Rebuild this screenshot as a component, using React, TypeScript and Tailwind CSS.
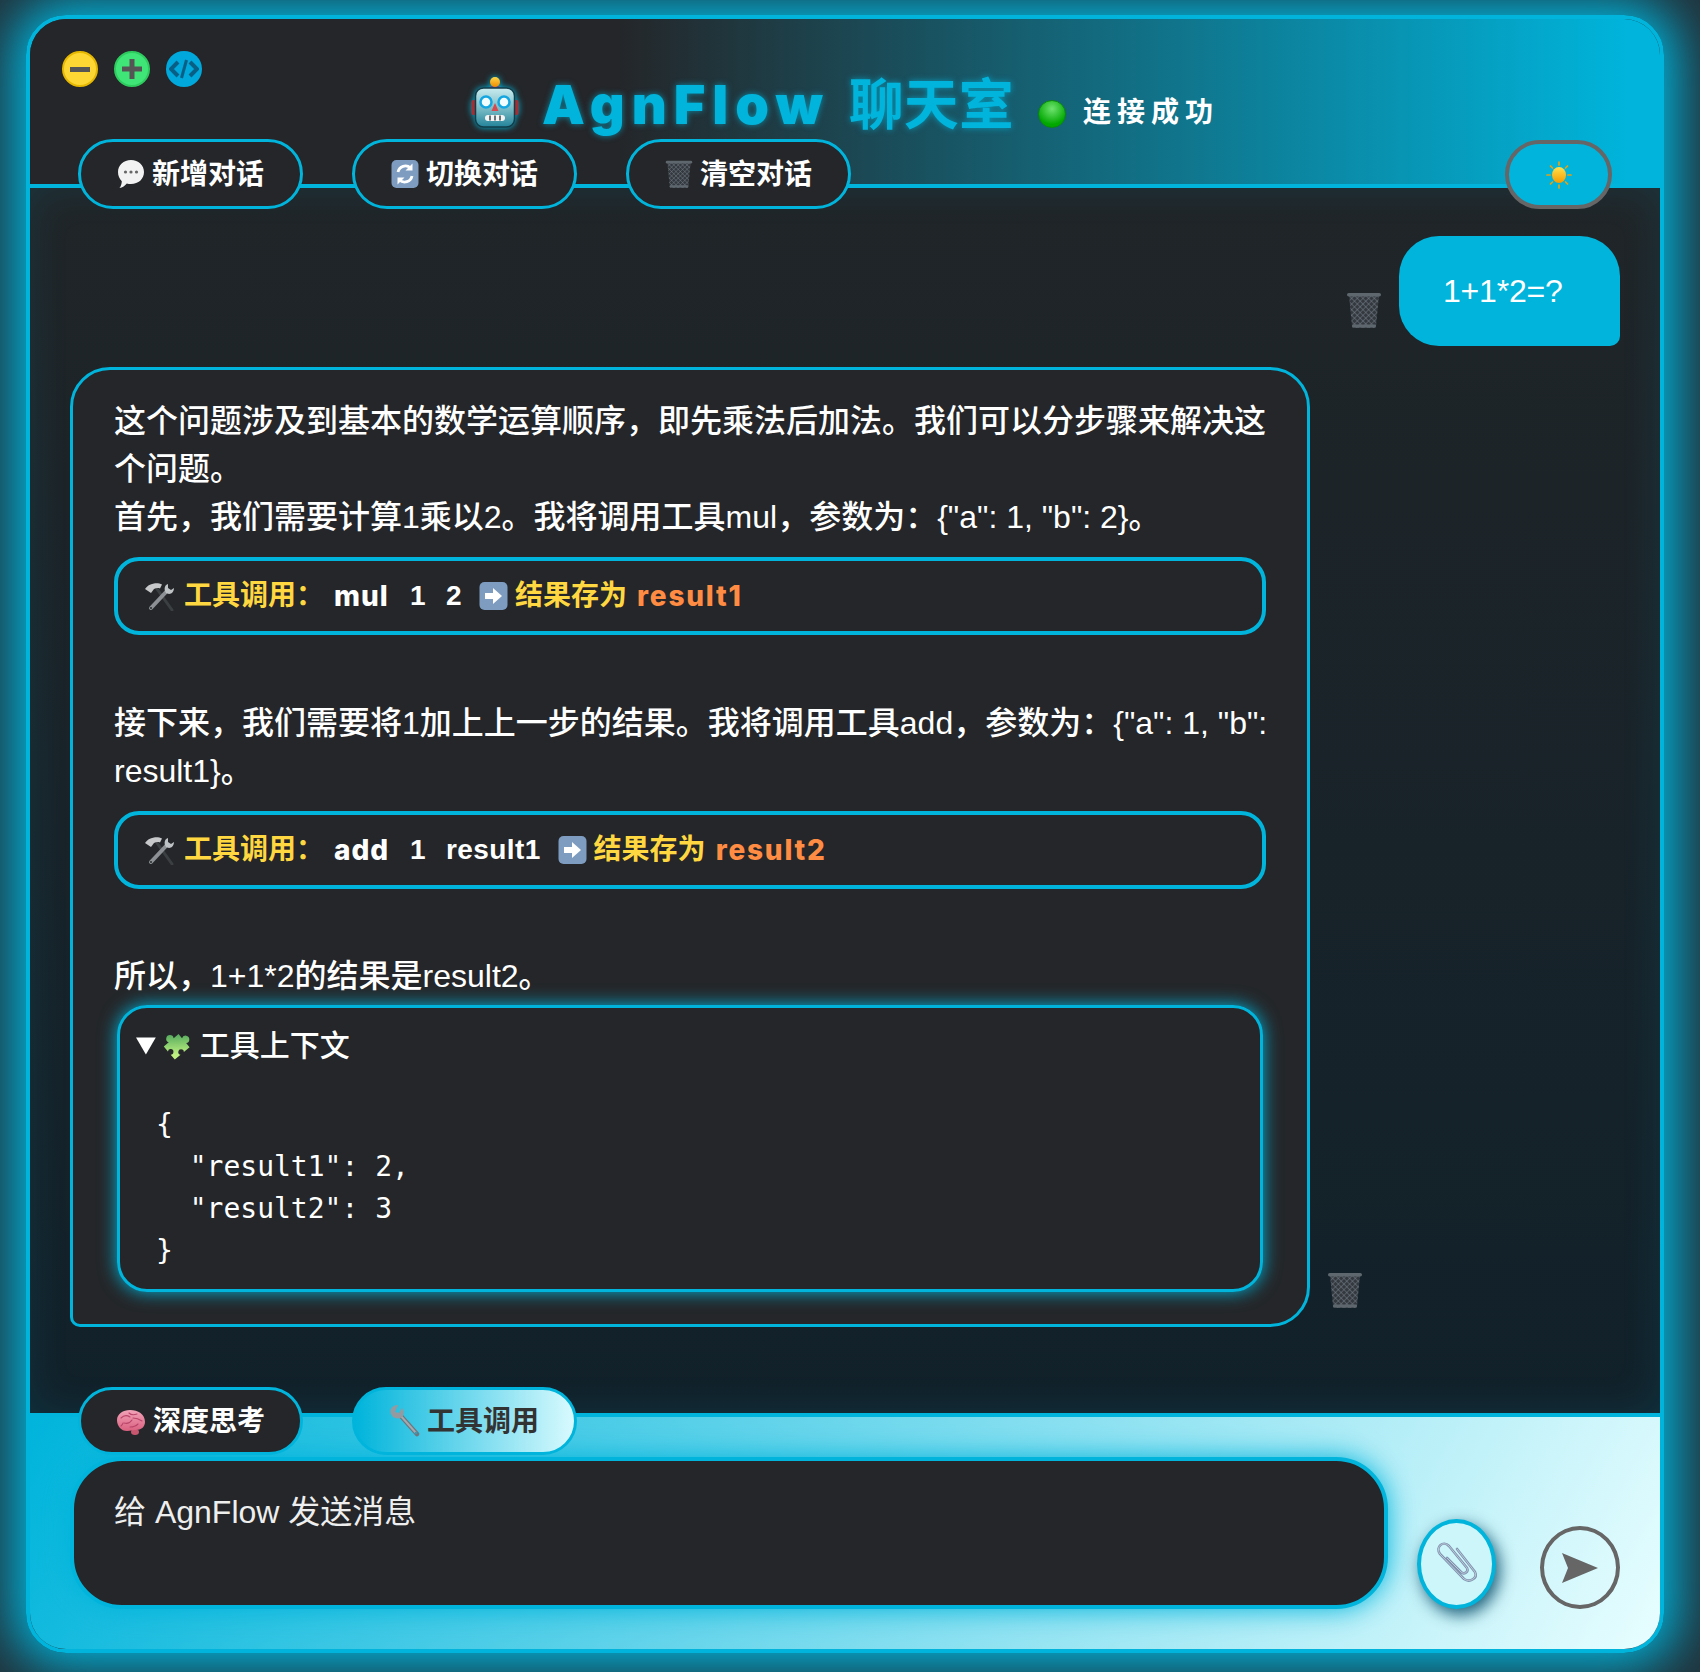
import React from "react";

const Robot = () => (
  <svg width="48" height="52" viewBox="0 0 48 52">
    <defs>
      <linearGradient id="robotHead" x1="0" y1="0" x2="0" y2="1">
        <stop offset="0" stopColor="#c9ecef" />
        <stop offset="0.55" stopColor="#76b9c4" />
        <stop offset="1" stopColor="#23839a" />
      </linearGradient>
      <linearGradient id="robotBall" x1="0" y1="0" x2="0" y2="1">
        <stop offset="0" stopColor="#ffd84a" />
        <stop offset="1" stopColor="#f08a00" />
      </linearGradient>
    </defs>
    <path d="M18 13c1-3 3-4 6-4s5 1 6 4z" fill="#5e4a8c" />
    <circle cx="24" cy="6" r="5" fill="url(#robotBall)" />
    <rect x="0.500" y="24" width="6" height="15" rx="2" fill="#a32f35" />
    <rect x="41.500" y="24" width="6" height="15" rx="2" fill="#a32f35" />
    <rect x="4.500" y="12" width="39" height="39" rx="8" fill="url(#robotHead)" stroke="#123c48" strokeWidth="1.500" />
    <circle cx="15" cy="26" r="5.500" fill="#f2fdff" stroke="#14a6e0" strokeWidth="2.500" />
    <circle cx="33" cy="26" r="5.500" fill="#f2fdff" stroke="#14a6e0" strokeWidth="2.500" />
    <path d="M24 27l3.500 8h-7z" fill="#d8484f" />
    <rect x="14" y="39" width="20" height="6" rx="3" fill="#f2f4f4" />
    <path d="M19 39.500v5M24 39.500v5M29 39.500v5" stroke="#37474f" strokeWidth="1.500" />
  </svg>
);

const Bubble = () => (
  <svg width="28" height="30" viewBox="0 0 28 30">
    <path d="M14 1c7.500 0 13 5 13 12s-5.500 12-13 12c-1.500 0-3-.2-4.200-.6C8 26.500 5.500 28.500 2.500 29c1.300-1.700 2.200-4 2.300-6.800C2.400 19.900 1 16.700 1 13 1 6 6.500 1 14 1z" fill="#f2f2f2" />
    <circle cx="8.500" cy="13" r="1.600" fill="#666" />
    <circle cx="14" cy="13" r="1.600" fill="#666" />
    <circle cx="19.500" cy="13" r="1.600" fill="#666" />
  </svg>
);

const Refresh = () => (
  <svg width="28" height="30" viewBox="0 0 28 30">
    <rect x="0.500" y="1" width="27" height="28" rx="5" fill="#7d9cc0" />
    <path d="M7 13a7.500 7.500 0 0 1 12.500-4" fill="none" stroke="#fff" strokeWidth="2.800" />
    <path d="M21.500 4.500v7h-7z" fill="#fff" />
    <path d="M21 17a7.500 7.500 0 0 1-12.500 4" fill="none" stroke="#fff" strokeWidth="2.800" />
    <path d="M6.500 25.500v-7h7z" fill="#fff" />
  </svg>
);

const Trash = ({ w = 28, h = 30 }: { w?: number; h?: number }) => (
  <svg width={w} height={h} viewBox="0 0 36 36">
    <defs>
      <pattern id="trashMesh" width="4" height="4" patternUnits="userSpaceOnUse" patternTransform="rotate(45)">
        <rect width="4" height="4" fill="#33393f" />
        <path d="M0 0h4M0 0v4" stroke="#79818a" strokeWidth="1" />
      </pattern>
    </defs>
    <path d="M3 3h30l-3 31c0 1-1 2-2 2H8c-1 0-2-1-2-2z" fill="url(#trashMesh)" />
    <rect x="1" y="1" width="34" height="3.500" rx="1.700" fill="#5f676e" />
    <rect x="6" y="32.500" width="24" height="3" rx="1.500" fill="#5f676e" />
  </svg>
);

const Sun = () => (
  <svg width="26" height="28" viewBox="0 0 26 28">
    <defs>
      <linearGradient id="sunCore" x1="0" y1="0" x2="0" y2="1">
        <stop offset="0" stopColor="#ffe14d" />
        <stop offset="1" stopColor="#f59a00" />
      </linearGradient>
    </defs>
    <ellipse cx="13" cy="14" rx="7" ry="8" fill="url(#sunCore)" />
    <path d="M13 1v3M13 24v3M1 14h3M22 14h3M4.500 5l2 2M19.500 21l2 2M21.500 5l-2 2M6.500 21l-2 2" stroke="#e8a010" strokeWidth="1.700" strokeLinecap="round" />
  </svg>
);

const Tools = () => (
  <svg width="30" height="30" viewBox="0 0 30 30">
    <path d="M12 8l15 21" stroke="#3c3f42" strokeWidth="3" strokeLinecap="round" />
    <path d="M0 8c2-3 5-5 9-5.500 3-.4 6 0 8 1l-2 4c-2-.7-4-.5-6 .5L6 12z" fill="#c6c8ca" />
    <path d="M21 11L6 27" stroke="#8d9195" strokeWidth="4" strokeLinecap="round" />
    <circle cx="6" cy="27" r="1" fill="#2a2c2e" />
    <path d="M23 3c-3 1-4 4-3 7l1 2 3 1c3 0 5-3 5-6l-3 2-3-2z" fill="#bfc2c5" />
  </svg>
);

const ArrowBox = () => (
  <svg width="29" height="30" viewBox="0 0 29 30">
    <rect x="0.500" y="1" width="28" height="28" rx="5" fill="#7d9cc0" />
    <path d="M6 12h8V7l9 8-9 8v-5H6z" fill="#fff" />
  </svg>
);

const Puzzle = () => (
  <svg width="30" height="30" viewBox="1 1 28 28">
    <defs>
      <linearGradient id="puzzleFill" x1="0.820" y1="0.120" x2="0.180" y2="0.880">
        <stop offset="0" stopColor="#45a058" />
        <stop offset="1" stopColor="#bdf080" />
      </linearGradient>
    </defs>
    <g transform="rotate(-40 15 15)">
      <path
        d="M6 8h6a3.500 3.500 0 1 1 6 0h6v5a3.500 3.500 0 1 1 0 6v5h-7a2.600 2.600 0 1 0-4 0H6v-6a2.600 2.600 0 1 0 0-4z"
        fill="url(#puzzleFill)"
      />
    </g>
  </svg>
);

const Brain = () => (
  <svg width="30" height="30" viewBox="0 0 30 30">
    <defs>
      <linearGradient id="brainFill" x1="0" y1="0" x2="0" y2="1">
        <stop offset="0" stopColor="#f2a3b8" />
        <stop offset="1" stopColor="#d9607f" />
      </linearGradient>
    </defs>
    <ellipse cx="19" cy="26" rx="4" ry="3" fill="#c9566f" />
    <path d="M1 14C1 8 7 4 14 4c8 0 15 4 15 12 0 5-4 8-9 8-4 0-5 1-9 1-6 0-10-5-10-11z" fill="url(#brainFill)" />
    <path d="M5 12c3-3 6-3 9-1M13 7c2 2 5 2 8 1M8 17c3 1 6 0 8-3M17 12c3 0 6 1 9 3M14 21c3 0 6-1 8-3M5 20c1-1 2-2 2-3" stroke="#b9466a" strokeWidth="1.100" fill="none" strokeLinecap="round" />
  </svg>
);

const Wrench = () => (
  <svg width="30" height="32" viewBox="0 0 30 32">
    <path d="M10 10l17 19" stroke="#6f767c" strokeWidth="4.500" strokeLinecap="round" />
    <path d="M10 10l16 18" stroke="#a3a9ae" strokeWidth="2" strokeLinecap="round" />
    <circle cx="26" cy="28" r="1.200" fill="#2e9dc0" />
    <path d="M8 0C3 0-1 4 1 9l2 3c3 2 8 2 10-1 1-3 1-6-1-8l-3 5-4-1z" fill="#949aa0" />
  </svg>
);

const Paperclip = () => (
  <svg width="60" height="60" viewBox="2 3 60 60" fill="none">
    <path d="M32 18L50 41C53 47 45 52 39 48L15 23C10 16 18 9 24 15L42 37C44 41 39 44 36 41L22 27" stroke="#7f93ad" strokeWidth="2.600" strokeLinecap="round" />
    <path d="M32 18L50 41C53 47 45 52 39 48L15 23C10 16 18 9 24 15L42 37C44 41 39 44 36 41L22 27" stroke="#c4cfdf" strokeWidth="0.900" strokeLinecap="round" />
  </svg>
);

const Resizer = () => (
  <svg width="14" height="14" viewBox="0 0 14 14">
    <path d="M1 13L13 1M7 13l6-6" stroke="#2d4a52" strokeWidth="2" />
  </svg>
);

const NavButton = ({ icon, label }: { icon: React.ReactNode; label: string }) => (
  <button className="flex h-[70px] w-[225px] items-center justify-center gap-[7px] rounded-[35px] border-[3px] border-[#00b4db] bg-[#242629] text-[28px] font-bold text-white">
    {icon}
    <span className="pt-[2px]">{label}</span>
  </button>
);

const ToolCall = ({ name, args, result }: { name: string; args: string[]; result: string }) => (
  <div className="mt-[16px] flex h-[78px] items-center rounded-[25px] border-4 border-[#00b4db] pl-[27px] text-[28px] font-bold">
    <Tools />
    <span className="ml-[9px] w-[140px] text-[#ffd740]">工具调用：</span>
    <span className="ml-[10px] w-[59px] font-['Inter',sans-serif] font-extrabold tracking-[1px] text-white">{name}</span>
    <span className="ml-[17px] flex gap-[20px] font-['Liberation_Sans',sans-serif] tracking-[0.4px] text-white">
      {args.map((a) => (
        <span key={a}>{a}</span>
      ))}
    </span>
    <span className="ml-[17px]">
      <ArrowBox />
    </span>
    <span className="ml-[7px] text-[#ffd740]">结果存为</span>
    <span className="ml-[10px] font-['Inter',sans-serif] font-extrabold tracking-[1.800px] text-[#ff8c42]">{result}</span>
  </div>
);

const contextJson = `{
  "result1": 2,
  "result2": 3
}`;

export default function App() {
  return (
    <div className="h-[1672px] w-[1700px] overflow-hidden bg-[#20343d] pl-[26px] pt-[15px] font-['Liberation_Sans','Noto_Sans_CJK_SC',sans-serif]">
      <div className="flex h-[1638px] w-[1638px] flex-col overflow-hidden rounded-[40px] border-4 border-[#00b4db] shadow-[0_0_50px_14px_#00b4db]">
        {/* header */}
        <header className="relative z-10 h-[169px] shrink-0 border-b-4 border-[#00b4db] bg-[linear-gradient(90deg,#242629_36%,#00b4db_98%)]">
          <div className="grid h-[120px] grid-cols-[1fr_auto_1fr]">
            <div className="flex gap-[16px] pl-[32px] pt-[32px]">
              <span className="flex h-[36px] w-[36px] items-center justify-center rounded-full border-2 border-[#e6b800] bg-[#fdd835]">
                <span className="h-[5px] w-[20px] bg-[#555]" />
              </span>
              <span className="flex h-[36px] w-[36px] items-center justify-center rounded-full border-2 border-[#2ecc5f] bg-[#3fe677]">
                <svg width="24" height="24" viewBox="0 0 24 24">
                  <path d="M12 2v20M2 12h20" stroke="#555" strokeWidth="5" />
                </svg>
              </span>
              <span className="flex h-[36px] w-[36px] items-center justify-center rounded-full bg-[#00a8dc]">
                <svg width="30" height="24" viewBox="0 0 30 24" fill="none">
                  <path d="M9 5L2 12l7 7M21 5l7 7-7 7" stroke="#075f86" strokeWidth="4" />
                  <path d="M17.500 3l-5 18" stroke="#075f86" strokeWidth="3" />
                </svg>
              </span>
            </div>
            <div className="flex items-end pb-[1px]">
              <span className="mb-[10px] drop-shadow-[0_0_3px_#00b4db]">
                <Robot />
              </span>
              <h1 className="ml-[23px] text-[55px] font-bold leading-[66px] text-[#00b4db] [text-shadow:0_0_6px_rgba(0,180,219,0.7)]">
                <span className="font-['Inter',sans-serif] text-[54px] font-black tracking-[7px]">AgnFlow</span>
                <span className="ml-[19px]">聊天室</span>
              </h1>
              <span className="mb-[10px] ml-[24px] h-[28px] w-[28px] rounded-full border border-[#0a8a0a] bg-[radial-gradient(circle_at_50%_30%,#6fe36f,#00a800_70%)]" />
              <span className="mb-[5px] ml-[17px] text-[28px] font-bold leading-[40px] tracking-[6px] text-white">连接成功</span>
            </div>
            <div />
          </div>
          <div className="mb-[-25px] flex justify-between pl-[48px] pr-[48px]">
            <div className="flex gap-[49px]">
              <NavButton icon={<Bubble />} label="新增对话" />
              <NavButton icon={<Refresh />} label="切换对话" />
              <NavButton icon={<Trash />} label="清空对话" />
            </div>
            <button className="mt-[1px] flex h-[69px] w-[107px] items-center justify-center rounded-[35px] border-4 border-[#666] bg-[#00b4db]">
              <Sun />
            </button>
          </div>
        </header>

        {/* chat */}
        <main className="flex min-h-0 flex-1 flex-col gap-[21px] bg-[linear-gradient(180deg,#202528,#11212a)] pl-[40px] pr-[40px] pt-[48px] shadow-[inset_0_0_40px_rgba(0,180,219,0.12)]">
          <div className="flex items-end justify-end gap-[17px]">
            <span className="mb-[18px]">
              <Trash w={36} h={36} />
            </span>
            <div className="flex h-[110px] w-[221px] items-center rounded-[40px] rounded-br-[10px] bg-[#00b4db] pl-[44px] text-[32px] tracking-[-0.2px] text-white">
              1+1*2=?
            </div>
          </div>
          <div className="flex items-end gap-[17px]">
            <div className="h-[960px] w-[1240px] rounded-[40px] rounded-bl-[10px] border-[3px] border-[#00b4db] bg-[#242629] px-[41px] pt-[27px] text-[32px] font-medium leading-[48px] text-white">
              <p>
                这个问题涉及到基本的数学运算顺序，即先乘法后加法。我们可以分步骤来解决这个问题。
                <br />
                首先，我们需要计算1乘以2。我将调用工具mul，参数为：{'{"a": 1, "b": 2}'}。
              </p>
              <ToolCall name="mul" args={["1", "2"]} result="result1" />
              <p className="mt-[64px]">
                <span className="whitespace-nowrap">接下来，我们需要将1加上上一步的结果。我将调用工具add，参数为：{'{"a": 1, "b":'}</span>
                <br />
                {"result1}"}。
              </p>
              <ToolCall name="add" args={["1", "result1"]} result="result2" />
              <p className="mt-[63px]">所以，1+1*2的结果是result2。</p>
              <details
                open
                className="mx-[3px] mt-[5px] h-[287px] rounded-[30px] border-[3px] border-[#00b4db] px-[16px] pt-[15px] shadow-[0_0_18px_#00b4db]"
              >
                <summary className="cursor-pointer text-[30px] leading-[45px]">
                  <span className="ml-[-7px] inline-flex items-center gap-[9px] align-top">
                    <Puzzle />
                    工具上下文
                  </span>
                </summary>
                <pre className="mt-[36px] pl-[20px] font-['DejaVu_Sans_Mono',monospace] text-[28px] font-normal leading-[42px]">
                  {contextJson}
                </pre>
              </details>
            </div>
            <span className="mb-[19px]">
              <Trash w={36} h={36} />
            </span>
          </div>
        </main>

        {/* input area */}
        <footer className="relative h-[236px] shrink-0 border-t-4 border-[#00b4db] bg-[linear-gradient(120deg,#00b4db,#e8feff)]">
          <div className="relative mt-[-30px] flex gap-[49px] pl-[48px]">
            <button className="flex h-[68px] w-[225px] items-center justify-center gap-[7px] rounded-[34px] border-[3px] border-[#00b4db] bg-[#242629] text-[28px] font-bold text-white">
              <Brain />
              <span className="pt-[2px]">深度思考</span>
            </button>
            <button className="flex h-[68px] w-[225px] items-center justify-center gap-[7px] rounded-[34px] border-[3px] border-[#00b4db] bg-[linear-gradient(90deg,#00b4db,#d8fafe)] text-[28px] font-bold text-[#333]">
              <Wrench />
              <span className="pt-[2px]">工具调用</span>
            </button>
          </div>
          <div className="mt-[2px] flex items-end pl-[40px]">
            <textarea
              placeholder="给 AgnFlow 发送消息"
              className="h-[152px] w-[1318px] resize-none rounded-[52px] border-4 border-[#00b4db] bg-[#242629] px-[40px] pt-[27px] text-[32px] leading-[48px] text-white shadow-[0_0_28px_#00b4db] outline-none placeholder:text-[#eee]"
            />
            <button className="ml-[29px] flex h-[90px] w-[79px] items-center justify-center rounded-[50%] border-4 border-[#00b4db] bg-[#cdf6fb] shadow-[4px_6px_16px_rgba(0,70,100,0.85)]">
              <Paperclip />
            </button>
            <button className="ml-[44px] flex h-[83px] w-[80px] items-center justify-center rounded-[50%] border-4 border-[#666]">
              <svg width="38" height="32" viewBox="0 0 38 32">
                <path d="M1 1L37 16 1 31 7 16z" fill="#666" />
              </svg>
            </button>
          </div>
          <span className="absolute bottom-[1px] right-[1px]">
            <Resizer />
          </span>
        </footer>
      </div>
    </div>
  );
}
